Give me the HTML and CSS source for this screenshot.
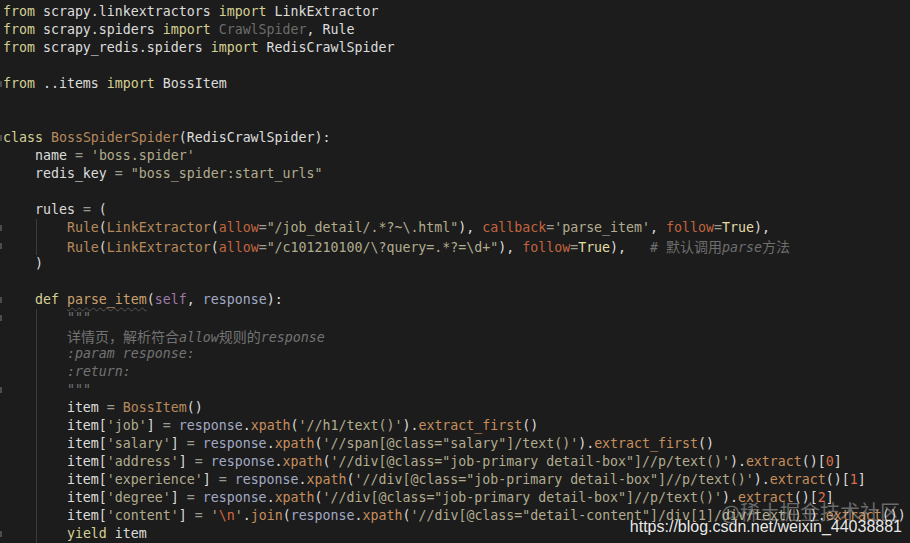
FILE: index.html
```html
<!DOCTYPE html>
<html>
<head>
<meta charset="utf-8">
<link rel="stylesheet" href="styles.css">
</head>
<body>
<div class="editor">
<div class="line"><span class="gut"></span><span class="code"><span class="kw">from</span> scrapy.linkextractors <span class="kw">import</span> LinkExtractor</span></div>
<div class="line"><span class="gut"></span><span class="code"><span class="kw">from</span> scrapy.spiders <span class="kw">import</span> <span class="dim">CrawlSpider</span>, Rule</span></div>
<div class="line"><span class="gut"></span><span class="code"><span class="kw">from</span> scrapy_redis.spiders <span class="kw">import</span> RedisCrawlSpider</span></div>
<div class="line"><span class="gut"></span><span class="code"> </span></div>
<div class="line"><span class="gut"><i class="mk"></i></span><span class="code"><span class="kw">from</span> ..items <span class="kw">import</span> BossItem</span></div>
<div class="line"><span class="gut"></span><span class="code"> </span></div>
<div class="line"><span class="gut"></span><span class="code"> </span></div>
<div class="line"><span class="gut"><i class="mk"></i></span><span class="code"><span class="kw">class</span> <span class="cls">BossSpiderSpider</span>(RedisCrawlSpider):</span></div>
<div class="line"><span class="gut"></span><span class="code">    name <span class="op">=</span> <span class="str">'boss.spider'</span></span></div>
<div class="line"><span class="gut"></span><span class="code">    redis_key <span class="op">=</span> <span class="str">"boss_spider:start_urls"</span></span></div>
<div class="line"><span class="gut"></span><span class="code"> </span></div>
<div class="line"><span class="gut"></span><span class="code">    rules <span class="op">=</span> (</span></div>
<div class="line guide"><span class="gut"><i class="mk"></i></span><span class="code">        <span class="cls">Rule</span>(<span class="cls">LinkExtractor</span>(<span class="kwa">allow</span><span class="op">=</span><span class="str">"/job_detail/.*?~\.html"</span>), <span class="kwa">callback</span><span class="op">=</span><span class="str">'parse_item'</span>, <span class="kwa">follow</span><span class="op">=</span><span class="tru">True</span>),</span></div>
<div class="line guide"><span class="gut"><i class="mk"></i></span><span class="code">        <span class="cls">Rule</span>(<span class="cls">LinkExtractor</span>(<span class="kwa">allow</span><span class="op">=</span><span class="str">"/c101210100/\?query=.*?=\d+"</span>), <span class="kwa">follow</span><span class="op">=</span><span class="tru">True</span>),   <span class="cm"># <span class="cjk">默认调用</span>parse<span class="cjk">方法</span></span></span></div>
<div class="line"><span class="gut"></span><span class="code">    )</span></div>
<div class="line"><span class="gut"></span><span class="code"> </span></div>
<div class="line"><span class="gut"><i class="mk"></i></span><span class="code">    <span class="kw">def</span> <span class="fdef">parse_item</span>(<span class="self">self</span>, <span class="param">response</span>):</span></div>
<div class="line guide"><span class="gut"><i class="mk"></i></span><span class="code">        <span class="doc">"""</span></span></div>
<div class="line guide"><span class="gut"></span><span class="code">        <span class="doc"><span class="cjk">详情页，解析符合</span>allow<span class="cjk">规则的</span>response</span></span></div>
<div class="line guide"><span class="gut"></span><span class="code">        <span class="doc">:param response:</span></span></div>
<div class="line guide"><span class="gut"></span><span class="code">        <span class="doc">:return:</span></span></div>
<div class="line guide"><span class="gut"><i class="mk"></i></span><span class="code">        <span class="doc">"""</span></span></div>
<div class="line guide"><span class="gut"></span><span class="code">        item <span class="op">=</span> <span class="cls">BossItem</span>()</span></div>
<div class="line guide"><span class="gut"></span><span class="code">        item[<span class="str">'job'</span>] <span class="op">=</span> <span class="param">response</span>.<span class="fn">xpath</span>(<span class="str">'//h1/text()'</span>).<span class="fn">extract_first</span>()</span></div>
<div class="line guide"><span class="gut"></span><span class="code">        item[<span class="str">'salary'</span>] <span class="op">=</span> <span class="param">response</span>.<span class="fn">xpath</span>(<span class="str">'//span[@class="salary"]/text()'</span>).<span class="fn">extract_first</span>()</span></div>
<div class="line guide"><span class="gut"></span><span class="code">        item[<span class="str">'address'</span>] <span class="op">=</span> <span class="param">response</span>.<span class="fn">xpath</span>(<span class="str">'//div[@class="job-primary detail-box"]//p/text()'</span>).<span class="fn">extract</span>()[<span class="num">0</span>]</span></div>
<div class="line guide"><span class="gut"></span><span class="code">        item[<span class="str">'experience'</span>] <span class="op">=</span> <span class="param">response</span>.<span class="fn">xpath</span>(<span class="str">'//div[@class="job-primary detail-box"]//p/text()'</span>).<span class="fn">extract</span>()[<span class="num">1</span>]</span></div>
<div class="line guide"><span class="gut"></span><span class="code">        item[<span class="str">'degree'</span>] <span class="op">=</span> <span class="param">response</span>.<span class="fn">xpath</span>(<span class="str">'//div[@class="job-primary detail-box"]//p/text()'</span>).<span class="fn">extract</span>()[<span class="num">2</span>]</span></div>
<div class="line guide"><span class="gut"></span><span class="code">        item[<span class="str">'content'</span>] <span class="op">=</span> <span class="str">'<span class="esc">\n</span>'</span>.<span class="fn">join</span>(<span class="param">response</span>.<span class="fn">xpath</span>(<span class="str">'//div[@class="detail-content"]/div[1]/div/text()'</span>).<span class="fn">extract</span>())</span></div>
<div class="line guide"><span class="gut"><i class="mk"></i></span><span class="code">        <span class="kw">yield</span> item</span></div>
</div>
<div class="wm">
<div class="wm-top">@稀土掘金技术社区</div>
<div class="wm-url">https://blog.csdn.net/weixin_44038881</div>
</div>
</body>
</html>
```
FILE: styles.css
```css
html, body {
  margin: 0;
  padding: 0;
  background: #1c1c1c;
  overflow: hidden;
}
body {
  width: 910px;
  height: 543px;
  position: relative;
}
.editor {
  padding-top: 3px;
  font-family: "DejaVu Sans Mono", "Noto Sans CJK SC", monospace;
  font-size: 13.28px;
  line-height: 18px;
  color: #dcdcdc;
}
.line {
  display: flex;
  height: 18px;
  white-space: pre;
}
.line.guide {
  background: linear-gradient(to right, transparent 36px, #3c3c3c 36px, #3c3c3c 37px, transparent 37px);
}
.gut {
  width: 3px;
  flex: none;
  position: relative;
}
.mk {
  display: block;
  width: 2px;
  height: 6px;
  margin-top: 6px;
  background: #4c4c4c;
}
.code {
  white-space: pre;
}
.kw { color: #d4d094; }
.dim { color: #6c6c6c; }
.cls { color: #b78a5d; }
.op { color: #9a9a90; }
.str { color: #b2ac8f; }
.kwa { color: #c2643f; }
.tru { color: #e4dda4; }
.cm { color: #6e6e6e; font-style: italic; }
.doc { color: #737373; font-style: italic; }
.cjk { font-family: "Noto Sans CJK SC", sans-serif; font-style: normal; font-size: 14px; }
.self { color: #9d7ba7; }
.param { color: #a2aac4; }
.fn { color: #c68f5c; }
.num { color: #da6f49; }
.esc { color: #d9643c; }
.fdef {
  color: #c9a06c;
  text-decoration: underline wavy #555;
  text-decoration-thickness: 1px;
  text-underline-offset: 3px;
}
.wm {
  position: absolute;
  right: 8px;
  top: 501px;
  text-align: right;
  font-family: "Liberation Sans", Arial, sans-serif;
  color: #ffffff;
}
.wm-top {
  font-family: "Noto Sans CJK SC", sans-serif;
  font-size: 20px;
  line-height: 22px;
  color: rgba(255, 255, 255, 0.35);
  margin-right: 2px;
}
.wm-url {
  font-size: 16px;
  line-height: 18px;
  margin-top: -5px;
  color: rgba(255, 255, 255, 0.92);
}
```
